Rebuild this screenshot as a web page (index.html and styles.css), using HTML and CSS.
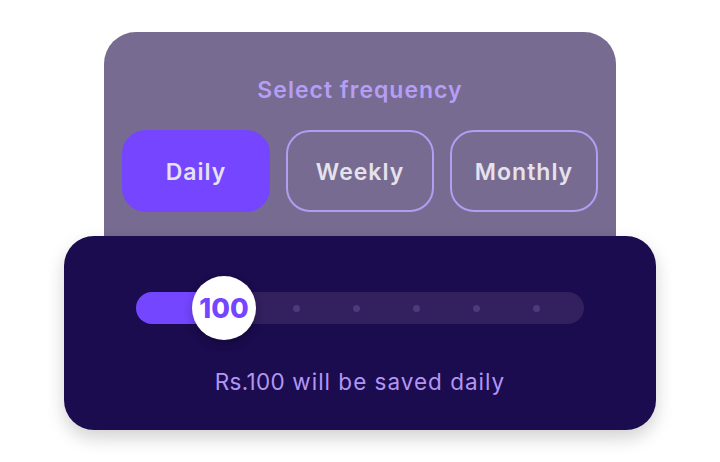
FILE: index.html
```html
<!DOCTYPE html>
<html>
<head>
<meta charset="utf-8">
<link rel="stylesheet" href="styles.css">
</head>
<body>
<div class="stage">
  <div class="freq-card">
    <div class="freq-title">Select frequency</div>
    <div class="freq-options">
      <div class="opt opt-active">Daily</div>
      <div class="opt">Weekly</div>
      <div class="opt">Monthly</div>
    </div>
  </div>
  <div class="amount-card">
    <div class="track">
      <div class="fill"></div>
      <div class="dots">
        <span class="dot"></span><span class="dot"></span><span class="dot"></span><span class="dot"></span><span class="dot"></span>
      </div>
      <div class="thumb">100</div>
    </div>
    <div class="summary"><span class="amt">Rs.100</span> will be saved daily</div>
  </div>
</div>
</body>
</html>
```

FILE: styles.css
```css
html, body {
  margin: 0;
  padding: 0;
  background: #ffffff;
}
body {
  width: 720px;
  height: 462px;
  overflow: hidden;
  font-family: "Inter", "Liberation Sans", sans-serif;
}
.stage {
  padding-top: 32px;
  display: flex;
  flex-direction: column;
  align-items: center;
}
.freq-card {
  box-sizing: border-box;
  width: 512px;
  height: 204px;
  background: #776b91;
  border-radius: 32px 32px 0 0;
  padding: 43px 18px 0;
}
.freq-title {
  text-align: center;
  color: #b69df5;
  font-size: 23px;
  font-weight: 600;
  line-height: 30px;
  letter-spacing: 1px;
}
.freq-options {
  display: flex;
  gap: 16px;
  margin-top: 25px;
}
.opt {
  box-sizing: border-box;
  width: 148px;
  height: 82px;
  border: 2px solid #b49cf2;
  border-radius: 24px;
  display: flex;
  align-items: center;
  justify-content: center;
  color: #e6e2ec;
  font-size: 23px;
  font-weight: 600;
  letter-spacing: 1px;
  padding-top: 2px;
}
.opt-active {
  background: #7545ff;
  border-color: #7545ff;
}
.amount-card {
  box-sizing: border-box;
  width: 592px;
  height: 194px;
  background: #1b0b4f;
  border-radius: 30px;
  padding: 56px 72px 0;
  box-shadow: 0 8px 18px rgba(0, 0, 0, 0.18);
}
.track {
  position: relative;
  height: 32px;
  border-radius: 16px;
  background: #32205f;
  display: flex;
  align-items: center;
}
.fill {
  width: 88px;
  height: 32px;
  border-radius: 16px 0 0 16px;
  background: #7446ff;
}
.dots {
  display: flex;
  gap: 53px;
  margin-left: 69px;
}
.dot {
  width: 7px;
  height: 7px;
  border-radius: 50%;
  background: #4b3b7c;
}
.thumb {
  position: absolute;
  left: 56px;
  top: -16px;
  width: 64px;
  height: 64px;
  border-radius: 50%;
  background: #ffffff;
  box-shadow: 0 4px 10px rgba(0, 0, 0, 0.25);
  display: flex;
  align-items: center;
  justify-content: center;
  color: #7446ff;
  font-size: 27px;
  font-weight: 800;
}
.summary {
  margin-top: 43px;
  text-align: center;
  color: #b096f2;
  font-size: 22.5px;
  font-weight: 400;
  line-height: 30px;
  letter-spacing: 1px;
}
.amt {
  letter-spacing: 0.3px;
}
```
